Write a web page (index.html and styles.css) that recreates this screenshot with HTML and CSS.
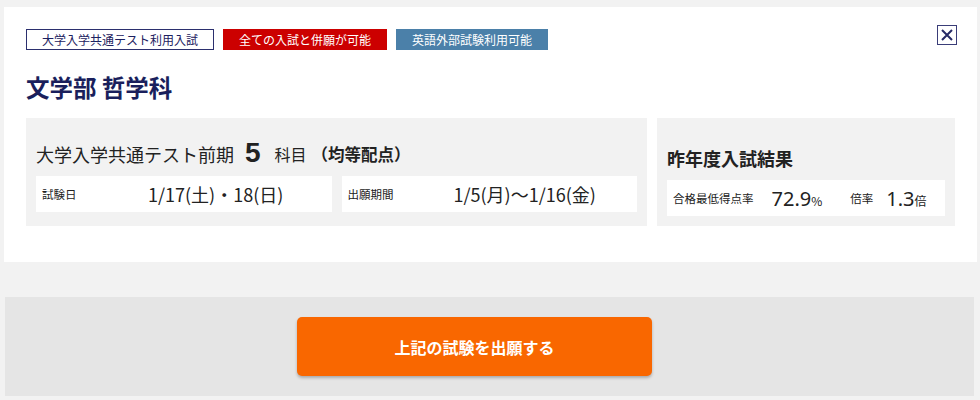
FILE: index.html
```html
<!DOCTYPE html>
<html lang="ja">
<head>
    <meta charset="UTF-8">
    <meta name="viewport" content="width=device-width, initial-scale=1.0">
    <title>文学部 哲学科</title>
    <link rel="stylesheet" href="styles.css">
</head>
<body>

<div class="panel">
    <button class="close-btn" aria-label="閉じる">
        <svg width="12" height="12" viewBox="0 0 12 12">
            <path d="M1 1 L11 11 M11 1 L1 11" stroke="#262a66" stroke-width="2" fill="none"/>
        </svg>
    </button>

    <div class="tags">
        <span class="tag tag-outline">大学入学共通テスト利用入試</span>
        <span class="tag tag-red">全ての入試と併願が可能</span>
        <span class="tag tag-blue">英語外部試験利用可能</span>
    </div>

    <h2 class="title">文学部 哲学科</h2>

    <div class="info">
        <div class="box box-exam">
            <h3 class="box-head">
                大学入学共通テスト前期<span class="count">5</span><span class="unit">科目</span><span class="note">（均等配点）</span>
            </h3>
            <div class="cells">
                <div class="cell">
                    <span class="label">試験日</span>
                    <span class="value">1/17(土)・18(日)</span>
                </div>
                <div class="cell">
                    <span class="label">出願期間</span>
                    <span class="value">1/5(月)〜1/16(金)</span>
                </div>
            </div>
        </div>

        <div class="box box-result">
            <h3 class="box-head result-head">昨年度入試結果</h3>
            <div class="cell result-cell">
                <span class="label">合格最低得点率</span>
                <span class="num">72.9<small>%</small></span>
                <span class="label rate-label">倍率</span>
                <span class="num num-rate">1.3<small>倍</small></span>
            </div>
        </div>
    </div>
</div>

<div class="apply-bar">
    <button class="apply-btn">上記の試験を出願する</button>
</div>

</body>
</html>
```

FILE: styles.css
```css
body {
    margin: 0;
    background-color: #f2f2f2;
    font-family: "Noto Sans CJK JP", "Noto Sans", sans-serif;
    color: #222;
}
.panel {
    position: relative;
    background-color: #fff;
    margin: 7px 3px 0 4px;
    padding: 22px 22px 36px 22px;
}
.close-btn {
    position: absolute;
    top: 18px;
    right: 20px;
    width: 20px;
    height: 20px;
    padding: 0;
    border: 1.5px solid #3a3d78;
    background: #fff;
    display: flex;
    align-items: center;
    justify-content: center;
    cursor: pointer;
}
.tags {
    display: flex;
    gap: 9px;
}
.tag {
    display: inline-block;
    font-size: 12px;
    line-height: 19px;
    padding: 0 15px;
    border: 1px solid transparent;
}
.tag-outline {
    border-color: #2b2f6e;
    color: #1c2160;
}
.tag-red {
    background-color: #cc0000;
    border-color: #cc0000;
    color: #fff;
}
.tag-blue {
    background-color: #4b80a9;
    border-color: #4b80a9;
    color: #fff;
}
.title {
    margin: 21px 0 0 0;
    font-size: 23.5px;
    line-height: 32px;
    font-weight: bold;
    color: #1a1f5c;
}
.info {
    display: flex;
    gap: 10px;
    margin-top: 15px;
}
.box {
    background-color: #f2f2f2;
    padding: 20px 10px 10px 10px;
}
.box-exam {
    width: 601px;
}
.box-result {
    flex: 1;
}
.box-head {
    margin: 0 0 6px 0;
    height: 32px;
    display: flex;
    align-items: center;
    font-size: 18px;
    font-weight: normal;
    white-space: nowrap;
}
.count {
    font-family: "Liberation Sans", "Noto Sans", sans-serif;
    font-size: 28px;
    font-weight: bold;
    margin: -3px 14px 0 11px;
}
.unit {
    font-size: 16px;
}
.note {
    font-weight: bold;
    font-size: 16.5px;
    margin-left: 5px;
}
.result-head {
    font-weight: bold;
    font-size: 18px;
    padding-top: 4px;
}
.cells {
    display: flex;
    gap: 10px;
}
.cell {
    flex: 1;
    background-color: #fff;
    height: 36px;
    display: flex;
    align-items: center;
    padding-left: 6px;
}
.label {
    font-size: 11.5px;
    width: 106px;
    flex-shrink: 0;
}
.value {
    font-size: 18px;
}
.result-cell .label {
    width: auto;
}
.num {
    font-family: "Noto Sans", "Noto Sans CJK JP", sans-serif;
    font-size: 20px;
    margin-left: 18px;
}
.num small {
    font-family: "Noto Sans CJK JP", "Noto Sans", sans-serif;
    font-size: 12px;
}
.rate-label {
    margin-left: 28px;
}
.num-rate {
    margin-left: 13px;
}
.apply-bar {
    background-color: #e5e5e5;
    margin: 35px 6px 0 5px;
    padding: 20px 0 20px 292px;
}
.apply-btn {
    width: 355px;
    height: 59px;
    background-color: #f96700;
    color: #fff;
    border: none;
    border-radius: 5px;
    box-shadow: 0 2px 3px rgba(0, 0, 0, 0.25);
    font-family: "Noto Sans CJK JP", "Noto Sans", sans-serif;
    font-size: 16px;
    font-weight: bold;
    cursor: pointer;
}
```
